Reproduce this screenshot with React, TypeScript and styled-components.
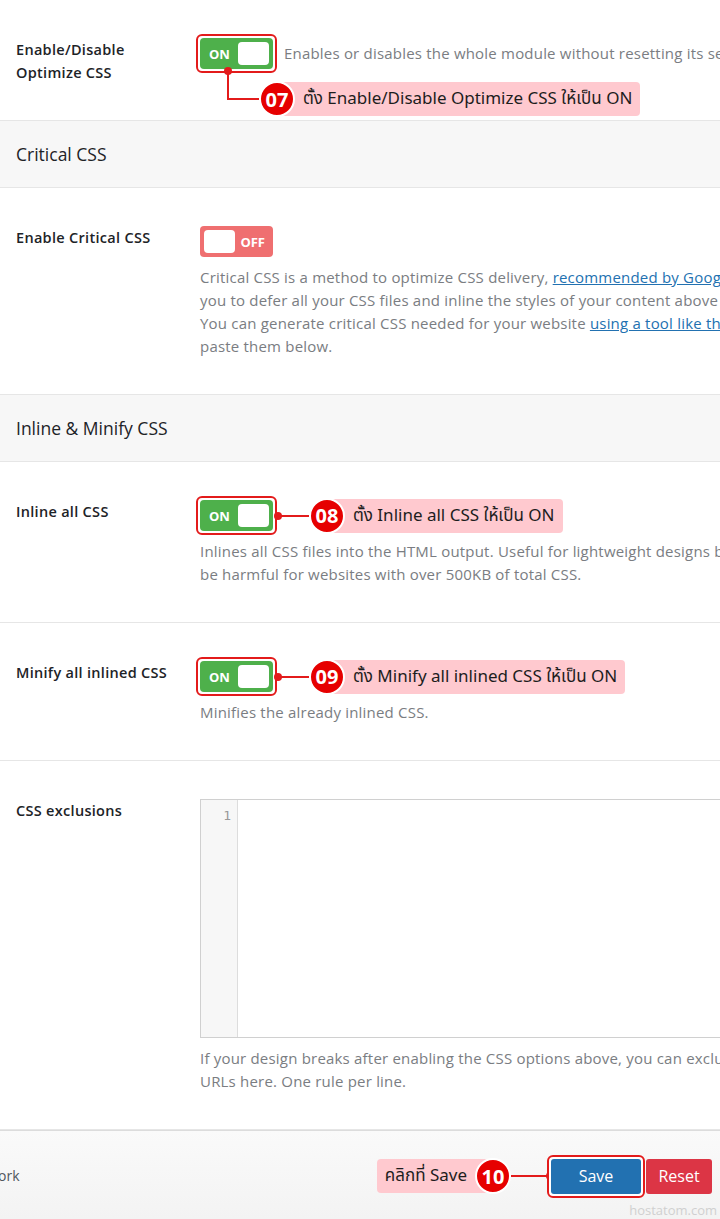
import React from 'react';
import styled, { createGlobalStyle } from 'styled-components';

const GlobalStyle = createGlobalStyle`
  html, body {
    margin: 0;
    padding: 0;
    background: #fff;
  }
  body {
    font-family: 'Open Sans', 'Noto Sans', 'Noto Sans Thai', sans-serif;
    color: #1d2327;
    overflow: hidden;
  }
`;

const RED = '#e31b1b';

const Page = styled.div`
  width: 720px;
  overflow: hidden;
  position: relative;
`;

const Row = styled.div<{ $bottom?: number }>`
  display: grid;
  grid-template-columns: 200px 1fr;
  padding: 38px 0 ${(p) => p.$bottom ?? 36}px;
  border-bottom: 1px solid #e6e6e6;
`;

const Label = styled.div`
  padding-left: 16px;
  font-size: 14.5px;
  font-weight: 600;
  letter-spacing: 0.3px;
  line-height: 23px;
  color: #1d2327;
`;

const Content = styled.div`
  display: flex;
  flex-direction: column;
  gap: 9px;
  min-width: 0;
`;

const ControlLine = styled.div`
  display: flex;
  align-items: center;
  height: 31px;
  white-space: nowrap;
`;

const SectionHeader = styled.div`
  height: 66px;
  display: flex;
  align-items: center;
  padding-left: 16px;
  background: #f7f7f7;
  border-bottom: 1px solid #e6e6e6;
  font-size: 17.5px;
  color: #1d2327;
`;

const Description = styled.div`
  font-size: 15px;
  letter-spacing: 0.2px;
  line-height: 23px;
  color: #7a7d82;
  white-space: nowrap;
  a {
    color: #2271b1;
    text-decoration: underline;
  }
`;

const InlineDescription = styled(Description)`
  margin-left: 11px;
`;

const Switch = styled.div<{ $on: boolean }>`
  box-sizing: border-box;
  width: 73px;
  height: 31px;
  border-radius: 4px;
  background: ${(p) => (p.$on ? '#4eb04b' : '#ef6f70')};
  display: flex;
  flex-direction: ${(p) => (p.$on ? 'row' : 'row-reverse')};
  align-items: center;
  justify-content: space-between;
  padding: ${(p) => (p.$on ? '0 4px 0 9px' : '0 8px 0 4px')};
  color: #fff;
  font-size: 13px;
  font-weight: 700;
`;

const Knob = styled.span`
  width: 31px;
  height: 23px;
  border-radius: 4px;
  background: #fff;
`;

const Highlight = styled.div`
  position: relative;
  display: inline-flex;
  margin: -4px;
  padding: 2px;
  border: 2px solid ${RED};
  border-radius: 6px;
  background: #fff;
  flex: none;
`;

const Badge = styled.span`
  position: relative;
  z-index: 2;
  flex: none;
  width: 32px;
  height: 32px;
  border-radius: 50%;
  border: 2px solid #fff;
  background: #e60000;
  color: #fff;
  font-size: 20px;
  font-weight: 700;
  display: flex;
  align-items: center;
  justify-content: center;
`;

const Pill = styled.span<{ $side: 'left' | 'right' }>`
  position: relative;
  z-index: 1;
  height: 34px;
  display: flex;
  align-items: center;
  background: #ffc9cf;
  border-radius: 4px;
  font-family: 'Noto Sans', 'Noto Sans Thai', 'DejaVu Sans', sans-serif;
  font-size: 17px;
  color: #1d1d1d;
  white-space: nowrap;
  ${(p) =>
    p.$side === 'right'
      ? 'margin-left: -14px; padding: 0 8px 0 22px;'
      : 'margin-right: -14px; padding: 0 22px 0 8px;'}
`;

const Connector = styled.span<{ $width: number; $dot: 'left' | 'right' }>`
  position: relative;
  flex: none;
  width: ${(p) => p.$width}px;
  height: 2px;
  background: ${RED};
  &::before {
    content: '';
    position: absolute;
    top: -3px;
    ${(p) => (p.$dot === 'left' ? 'left: -3px;' : 'right: -3px;')}
    width: 8px;
    height: 8px;
    border-radius: 50%;
    background: ${RED};
  }
`;

const Callout = styled.div`
  display: flex;
  align-items: center;
  height: 31px;
  margin-left: 4px;
`;

const DropCallout = styled.div`
  position: absolute;
  top: 100%;
  left: 29px;
  display: flex;
  align-items: flex-end;
  z-index: 3;
`;

const Elbow = styled.span`
  position: relative;
  width: 30px;
  height: 27px;
  border-left: 2px solid ${RED};
  border-bottom: 2px solid ${RED};
  &::before {
    content: '';
    position: absolute;
    top: -4px;
    left: -5px;
    width: 8px;
    height: 8px;
    border-radius: 50%;
    background: ${RED};
  }
`;

const DropGroup = styled.div`
  display: flex;
  align-items: center;
  margin-bottom: -17px;
`;

const Editor = styled.div`
  display: flex;
  width: 700px;
  height: 237px;
  border: 1px solid #d0d0d0;
  background: #fff;
`;

const Gutter = styled.div`
  width: 37px;
  box-sizing: border-box;
  background: #f7f7f7;
  border-right: 1px solid #ddd;
  padding: 8px 6px 0 0;
  text-align: right;
  font-family: 'DejaVu Sans Mono', 'Liberation Mono', monospace;
  font-size: 13px;
  color: #999;
`;

const Footer = styled.div`
  position: relative;
  height: 88px;
  border-top: 1px solid #dcdcdc;
  background: linear-gradient(#fafafa, #f3f3f3);
  display: flex;
  align-items: center;
  justify-content: space-between;
  padding-right: 8px;
`;

const FooterNote = styled.span`
  font-size: 14px;
  color: #50575e;
  margin-left: -2px;
`;

const Actions = styled.div`
  display: flex;
  align-items: center;
  margin-top: 2px;
`;

const Button = styled.button<{ $tone: 'save' | 'reset' }>`
  height: 35px;
  border: none;
  border-radius: 3px;
  padding: 0;
  width: ${(p) => (p.$tone === 'save' ? 90 : 66)}px;
  background: ${(p) => (p.$tone === 'save' ? '#2271b1' : '#dc3545')};
  color: #fff;
  font-family: 'Open Sans', 'Noto Sans', sans-serif;
  font-size: 16px;
  margin-left: ${(p) => (p.$tone === 'reset' ? 5 : 0)}px;
`;

const Watermark = styled.span`
  position: absolute;
  right: 3px;
  bottom: 0px;
  font-size: 13px;
  color: #d0d0d0;
`;

const Toggle = ({ on }: { on: boolean }) => (
  <Switch $on={on}>
    <span>{on ? 'ON' : 'OFF'}</span>
    <Knob />
  </Switch>
);

const App = () => {
  return (
    <Page>
      <GlobalStyle />

      <Row>
        <Label>
          Enable/Disable
          <br />
          Optimize CSS
        </Label>
        <Content>
          <ControlLine>
            <Highlight>
              <Toggle on />
              <DropCallout>
                <Elbow />
                <DropGroup>
                  <Badge>07</Badge>
                  <Pill $side="right">ตั้ง Enable/Disable Optimize CSS ให้เป็น ON</Pill>
                </DropGroup>
              </DropCallout>
            </Highlight>
            <InlineDescription>Enables or disables the whole module without resetting its settings.</InlineDescription>
          </ControlLine>
        </Content>
      </Row>

      <SectionHeader>Critical CSS</SectionHeader>

      <Row>
        <Label>Enable Critical CSS</Label>
        <Content>
          <ControlLine>
            <Toggle on={false} />
          </ControlLine>
          <Description>
            Critical CSS is a method to optimize CSS delivery, <a>recommended by Google</a>. It allows
            <br />
            you to defer all your CSS files and inline the styles of your content above the fold.
            <br />
            You can generate critical CSS needed for your website <a>using a tool like this</a> and
            <br />
            paste them below.
          </Description>
        </Content>
      </Row>

      <SectionHeader>Inline &amp; Minify CSS</SectionHeader>

      <Row>
        <Label>Inline all CSS</Label>
        <Content>
          <ControlLine>
            <Highlight>
              <Toggle on />
            </Highlight>
            <Callout>
              <Connector $width={32} $dot="left" />
              <Badge>08</Badge>
              <Pill $side="right">ตั้ง Inline all CSS ให้เป็น ON</Pill>
            </Callout>
          </ControlLine>
          <Description>
            Inlines all CSS files into the HTML output. Useful for lightweight designs but can
            <br />
            be harmful for websites with over 500KB of total CSS.
          </Description>
        </Content>
      </Row>

      <Row>
        <Label>Minify all inlined CSS</Label>
        <Content>
          <ControlLine>
            <Highlight>
              <Toggle on />
            </Highlight>
            <Callout>
              <Connector $width={32} $dot="left" />
              <Badge>09</Badge>
              <Pill $side="right">ตั้ง Minify all inlined CSS ให้เป็น ON</Pill>
            </Callout>
          </ControlLine>
          <Description>Minifies the already inlined CSS.</Description>
        </Content>
      </Row>

      <Row>
        <Label>CSS exclusions</Label>
        <Content>
          <Editor>
            <Gutter>1</Gutter>
          </Editor>
          <Description>
            If your design breaks after enabling the CSS options above, you can exclude CSS file
            <br />
            URLs here. One rule per line.
          </Description>
        </Content>
      </Row>

      <Footer>
        <FooterNote>ork</FooterNote>
        <Actions>
          <Pill $side="left">คลิกที่ Save</Pill>
          <Badge>10</Badge>
          <Connector $width={40} $dot="right" />
          <Highlight>
            <Button $tone="save">Save</Button>
          </Highlight>
          <Button $tone="reset">Reset</Button>
        </Actions>
        <Watermark>hostatom.com</Watermark>
      </Footer>
    </Page>
  );
};

export default App;
